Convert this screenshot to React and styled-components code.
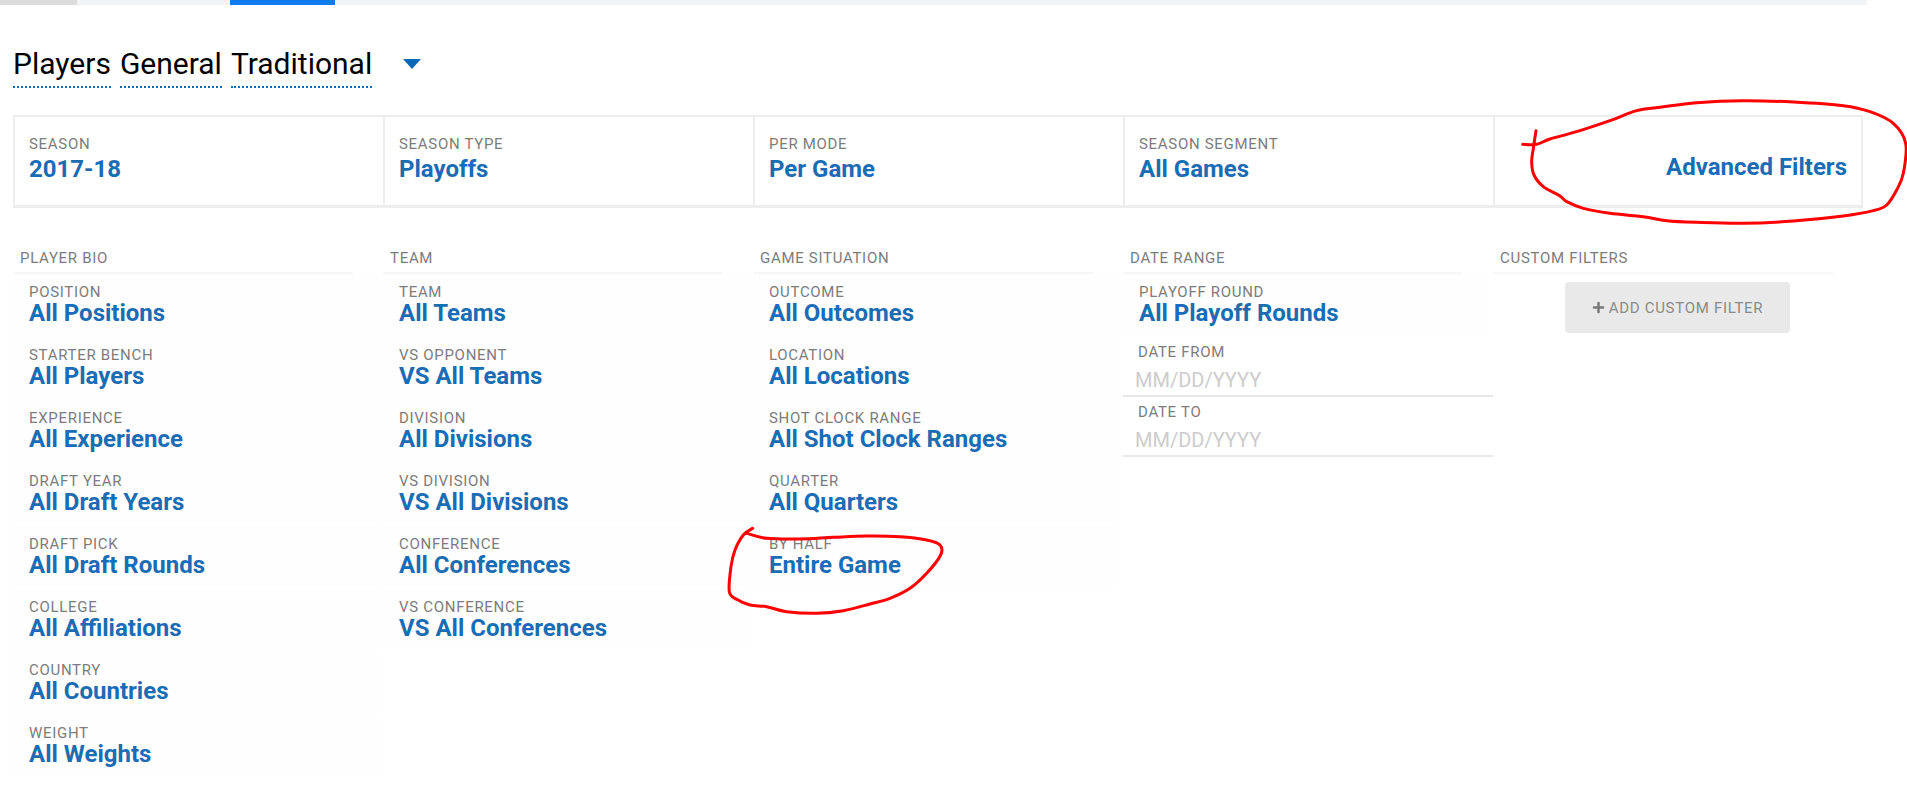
import React from 'react';
import styled, { createGlobalStyle } from 'styled-components';
import { FaPlus } from 'react-icons/fa';

const SUMMARY = [
  { label: 'SEASON', value: '2017-18' },
  { label: 'SEASON TYPE', value: 'Playoffs' },
  { label: 'PER MODE', value: 'Per Game' },
  { label: 'SEASON SEGMENT', value: 'All Games' },
];

const COLUMNS = [
  {
    title: 'PLAYER BIO',
    items: [
      ['POSITION', 'All Positions'],
      ['STARTER BENCH', 'All Players'],
      ['EXPERIENCE', 'All Experience'],
      ['DRAFT YEAR', 'All Draft Years'],
      ['DRAFT PICK', 'All Draft Rounds'],
      ['COLLEGE', 'All Affiliations'],
      ['COUNTRY', 'All Countries'],
      ['WEIGHT', 'All Weights'],
    ],
  },
  {
    title: 'TEAM',
    items: [
      ['TEAM', 'All Teams'],
      ['VS OPPONENT', 'VS All Teams'],
      ['DIVISION', 'All Divisions'],
      ['VS DIVISION', 'VS All Divisions'],
      ['CONFERENCE', 'All Conferences'],
      ['VS CONFERENCE', 'VS All Conferences'],
    ],
  },
  {
    title: 'GAME SITUATION',
    items: [
      ['OUTCOME', 'All Outcomes'],
      ['LOCATION', 'All Locations'],
      ['SHOT CLOCK RANGE', 'All Shot Clock Ranges'],
      ['QUARTER', 'All Quarters'],
      ['BY HALF', 'Entire Game'],
    ],
  },
];

// hand drawn circles, traced at 3x from the screenshot
const BIG_LOOP = [
  [78, 122], [70, 175], [65, 215], [72, 255], [100, 290], [150, 318], [170, 335], [220, 355],
  [300, 370], [400, 380], [470, 392], [560, 397], [700, 400], [850, 393], [1000, 378], [1090, 362],
  [1130, 345], [1160, 300], [1180, 250], [1187, 160], [1150, 100], [1080, 65], [1000, 47], [850, 36],
  [700, 32], [560, 38], [450, 52], [380, 62], [300, 92], [200, 125], [120, 147], [80, 163], [38, 163],
];

const SMALL_LOOP = [
  [158, 145], [130, 165], [105, 210], [93, 260], [88, 335], [110, 358], [150, 375], [200, 380],
  [260, 395], [350, 400], [430, 392], [510, 372], [570, 355], [630, 325], [680, 280], [722, 225],
  [720, 195], [680, 180], [600, 170], [500, 168], [400, 172], [300, 177], [200, 175], [140, 160],
];

const smooth = (pts) => {
  let d = `M${pts[0][0]} ${pts[0][1]}`;
  for (let i = 0; i < pts.length - 1; i++) {
    const p0 = pts[i - 1] || pts[i];
    const p1 = pts[i];
    const p2 = pts[i + 1];
    const p3 = pts[i + 2] || p2;
    const c1 = [p1[0] + (p2[0] - p0[0]) / 6, p1[1] + (p2[1] - p0[1]) / 6];
    const c2 = [p2[0] - (p3[0] - p1[0]) / 6, p2[1] - (p3[1] - p1[1]) / 6];
    d += ` C${c1[0]} ${c1[1]} ${c2[0]} ${c2[1]} ${p2[0]} ${p2[1]}`;
  }
  return d;
};

const App = () => {
  return (
    <Page>
      <GlobalStyle />
      <TopBar>
        <TopSegment $width={77} $color="#dcdcdc" />
        <TopSegment $width={153} $color="#f2f3f5" />
        <TopSegment $width={105} $color="#0f7bf0" />
      </TopBar>

      <Heading>
        <HeadingWord>Players</HeadingWord>
        <HeadingWord>General</HeadingWord>
        <HeadingWord>Traditional</HeadingWord>
        <Caret />
      </Heading>

      <Summary>
        {SUMMARY.map((s) => (
          <SummaryCell key={s.label}>
            <Label>{s.label}</Label>
            <SummaryValue>{s.value}</SummaryValue>
          </SummaryCell>
        ))}
        <AdvancedCell>
          <Value>Advanced Filters</Value>
        </AdvancedCell>
      </Summary>

      <Filters>
        {COLUMNS.map((col) => (
          <Column key={col.title}>
            <ColumnTitle>{col.title}</ColumnTitle>
            {col.items.map(([label, value]) => (
              <Item key={label}>
                <Label>{label}</Label>
                <Value>{value}</Value>
              </Item>
            ))}
          </Column>
        ))}

        <Column>
          <ColumnTitle>DATE RANGE</ColumnTitle>
          <Item>
            <Label>PLAYOFF ROUND</Label>
            <Value>All Playoff Rounds</Value>
          </Item>
          <DateField>
            <DateLabel>DATE FROM</DateLabel>
            <DateInput placeholder="MM/DD/YYYY" />
          </DateField>
          <DateField>
            <DateLabel>DATE TO</DateLabel>
            <DateInput placeholder="MM/DD/YYYY" />
          </DateField>
        </Column>

        <Column>
          <ColumnTitle>CUSTOM FILTERS</ColumnTitle>
          <AddButton>
            <FaPlus size={13} />
            ADD CUSTOM FILTER
          </AddButton>
        </Column>
      </Filters>

      <BigScribble viewBox="0 0 1191 450">
        <ScribblePath d={smooth(BIG_LOOP)} />
      </BigScribble>
      <SmallScribble viewBox="0 0 900 480">
        <ScribblePath d={smooth(SMALL_LOOP)} />
      </SmallScribble>
    </Page>
  );
};

const GlobalStyle = createGlobalStyle`
  html, body {
    margin: 0;
    padding: 0;
    background: #fff;
    overflow: hidden;
  }
  body {
    font-family: Roboto, 'Liberation Sans', sans-serif;
  }
`;

const Page = styled.div`
  position: relative;
  width: 1907px;
  height: 788px;
  overflow: hidden;
`;

const TopBar = styled.div`
  display: flex;
  width: 1867px;
  height: 5px;
  background: #f2f3f5;
`;

const TopSegment = styled.div`
  width: ${(p) => p.$width}px;
  background: ${(p) => p.$color};
`;

const Heading = styled.div`
  display: flex;
  align-items: center;
  gap: 9px;
  margin: 42px 0 0 13px;
`;

const HeadingWord = styled.span`
  font-size: 30px;
  line-height: 33px;
  color: #000;
  padding-bottom: 6px;
  border-bottom: 2px dotted #0a6cb8;
`;

const Caret = styled.span`
  width: 0;
  height: 0;
  margin: 0 0 7px 22px;
  border-left: 9px solid transparent;
  border-right: 9px solid transparent;
  border-top: 10px solid #0a69b6;
`;

const Summary = styled.div`
  display: grid;
  grid-template-columns: repeat(5, 370px);
  width: 1850px;
  height: 93px;
  margin: 27px 0 0 13px;
  box-sizing: border-box;
  border-top: 2px solid #ededed;
  border-bottom: 3px solid #ededed;
  border-right: 2px solid #ededed;
`;

const SummaryCell = styled.div`
  box-sizing: border-box;
  padding: 19px 0 0 14px;
  border-left: 2px solid #ededed;
`;

const AdvancedCell = styled(SummaryCell)`
  padding: 37px 16px 0 0;
  text-align: right;
`;

const Label = styled.div`
  font-size: 15px;
  line-height: 16px;
  letter-spacing: 0.7px;
  color: #7c7c7c;
`;

const Value = styled.div`
  font-size: 24px;
  line-height: 26px;
  font-weight: 700;
  color: #1a6cb4;
`;

const SummaryValue = styled(Value)`
  margin-top: 4px;
`;

const Filters = styled.div`
  display: grid;
  grid-template-columns: repeat(5, 370px);
  margin: 42px 0 0 13px;
`;

const Column = styled.div`
  display: flex;
  flex-direction: column;
`;

const ColumnTitle = styled.div`
  width: 340px;
  box-sizing: border-box;
  height: 24px;
  padding: 0 0 0 7px;
  font-size: 15px;
  line-height: 16px;
  letter-spacing: 0.7px;
  color: #7c7c7c;
  border-bottom: 2px solid #f7f7f7;
`;

const Item = styled.div`
  box-sizing: border-box;
  height: 63px;
  padding: 10px 0 0 16px;
  margin-right: 5px;
  background: linear-gradient(#fefefe 60px, #fff 60px);
`;

const DateField = styled.div`
  display: flex;
  flex-direction: column;
  height: 60px;
  box-sizing: border-box;
  padding-top: 7px;
  border-bottom: 2px solid #e8e8e8;
`;

const DateLabel = styled(Label)`
  padding-left: 15px;
`;

const DateInput = styled.input`
  box-sizing: border-box;
  width: 100%;
  height: 30px;
  margin-top: 5px;
  padding: 0 0 0 12px;
  border: none;
  outline: none;
  background: transparent;
  font-family: inherit;
  font-size: 20px;
  color: #333;
  &::placeholder {
    color: #cccccc;
    opacity: 1;
  }
`;

const AddButton = styled.button`
  display: flex;
  align-items: center;
  justify-content: center;
  gap: 4px;
  width: 225px;
  height: 51px;
  margin: 8px 0 0 72px;
  padding: 0;
  border: none;
  border-radius: 4px;
  background: #e9e9e9;
  font-family: inherit;
  font-size: 15px;
  letter-spacing: 0.7px;
  color: #8a8a8a;
  svg {
    color: #777;
  }
`;

const Scribble = styled.svg`
  position: absolute;
  fill: none;
`;

const BigScribble = styled(Scribble)`
  left: 1510px;
  top: 90px;
  width: 397px;
  height: 150px;
`;

const SmallScribble = styled(Scribble)`
  left: 700px;
  top: 480px;
  width: 300px;
  height: 160px;
`;

const ScribblePath = styled.path`
  stroke: #f00;
  stroke-width: 9;
  stroke-linecap: round;
  stroke-linejoin: round;
`;

export default App;
